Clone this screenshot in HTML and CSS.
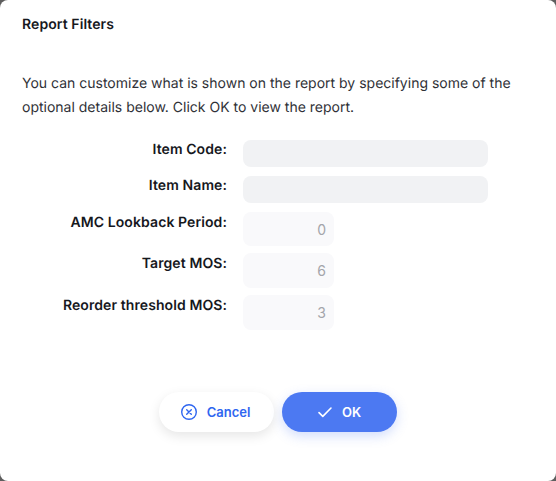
FILE: index.html
```html
<!DOCTYPE html>
<html lang="en">
<head>
  <meta charset="UTF-8">
  <title>Report Filters</title>
  <link rel="stylesheet" href="styles.css">
</head>
<body>
  <div class="dialog">
    <h2>Report Filters</h2>
    <p class="intro">You can customize what is shown on the report by specifying some of the optional details below. Click OK to view the report.</p>
    <div class="filters">
      <label class="text-label">Item Code:</label>
      <input class="text-input" type="text">
      <label class="text-label">Item Name:</label>
      <input class="text-input" type="text">
      <label>AMC Lookback Period:</label>
      <input class="num-input" type="text" placeholder="0">
      <label>Target MOS:</label>
      <input class="num-input" type="text" placeholder="6">
      <label>Reorder threshold MOS:</label>
      <input class="num-input" type="text" placeholder="3">
    </div>
    <div class="actions">
      <button class="btn-cancel">
        <svg width="18" height="18" viewBox="0 0 18 18" fill="none" stroke="currentColor" stroke-width="1.4" stroke-linecap="round"><circle cx="9" cy="9" r="7.3"/><path d="M6.7 6.7l4.6 4.6M11.3 6.7l-4.6 4.6"/></svg>
        Cancel
      </button>
      <button class="btn-ok">
        <svg width="18" height="18" viewBox="0 0 18 18" fill="none" stroke="currentColor" stroke-width="1.6" stroke-linecap="round" stroke-linejoin="round"><path d="M3 9.6l3.8 3.8L15 5"/></svg>
        OK
      </button>
    </div>
  </div>
</body>
</html>
```

FILE: styles.css
```css
* {
  box-sizing: border-box;
  margin: 0;
  padding: 0;
}

body {
  font-family: Inter, 'Liberation Sans', sans-serif;
  text-rendering: geometricPrecision;
  background: #5e5e5e;
  width: 556px;
  height: 481px;
  overflow: hidden;
}

.dialog {
  background: #fff;
  border-radius: 8px;
  height: 481px;
  padding: 16px 22px 0;
}

h2 {
  font-size: 14px;
  font-weight: 600;
  line-height: 17px;
  letter-spacing: 0.08px;
  color: #16181d;
}

.intro {
  margin-top: 39px;
  font-size: 14px;
  line-height: 24px;
  color: #2f3137;
}

.filters {
  display: grid;
  grid-template-columns: 205px 245px;
  column-gap: 16px;
  margin-top: 19.5px;
  justify-items: start;
}

label {
  justify-self: end;
  padding-top: 2px;
  font-size: 14px;
  font-weight: 600;
  line-height: 17px;
  letter-spacing: 0.09px;
  color: #16181d;
}

.text-label {
  padding-top: 1px;
}

input {
  border: none;
  outline: none;
  font-family: inherit;
  font-size: 14px;
}

.text-input {
  width: 245px;
  height: 27.5px;
  margin-bottom: 8.7px;
  border-radius: 8px;
  background: #f1f2f4;
}

.num-input {
  width: 91px;
  height: 34.6px;
  margin-bottom: 7px;
  border-radius: 8px;
  background: #f9f9fb;
  padding-right: 8px;
  text-align: right;
}

.num-input::placeholder {
  color: #a3a5aa;
  opacity: 1;
}

.actions {
  display: flex;
  justify-content: center;
  gap: 8px;
  margin-top: 55px;
}

button {
  display: flex;
  align-items: center;
  justify-content: center;
  gap: 8px;
  width: 115px;
  height: 40px;
  padding-right: 2px;
  border: none;
  border-radius: 20px;
  font-family: inherit;
  font-size: 13px;
  font-weight: 600;
  cursor: pointer;
}

.btn-cancel {
  gap: 9px;
  padding-right: 3px;
  background: #fff;
  color: #2f66f0;
  box-shadow: 0 4px 12px rgba(0,0,0,0.1);
}

.btn-ok {
  background: #4c79f2;
  color: #fff;
  box-shadow: 0 4px 12px rgba(76,121,242,0.25);
}
```
